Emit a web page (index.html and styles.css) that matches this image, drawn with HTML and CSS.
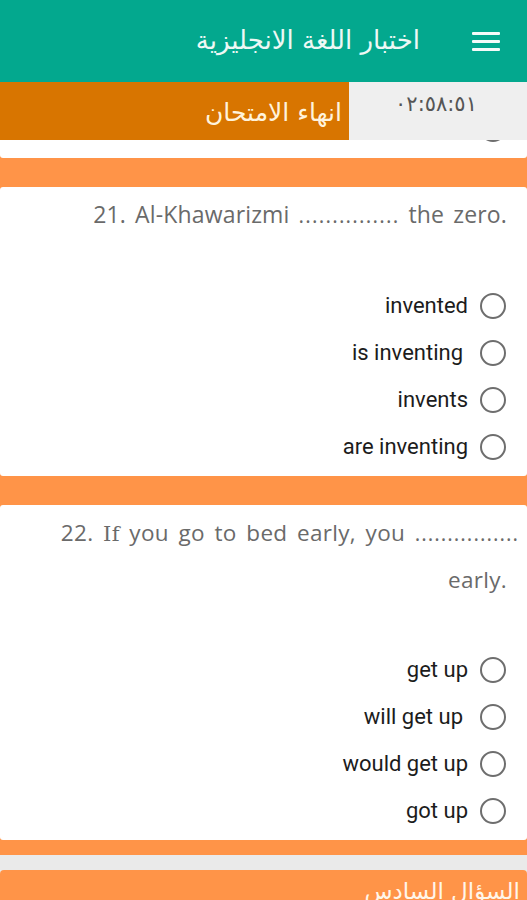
FILE: index.html
```
<!DOCTYPE html>
<html lang="ar">
<head>
<meta charset="utf-8">
<title>اختبار اللغة الانجليزية</title>
<link rel="stylesheet" href="styles.css">
</head>
<body>
<header class="appbar">
  <div class="menu" aria-label="menu">
    <span></span><span></span><span></span>
  </div>
  <h1 class="title">اختبار اللغة الانجليزية</h1>
</header>
<div class="exambar">
  <div class="finish">انهاء الامتحان</div>
  <div class="timer">٠٢:٥٨:٥١</div>
</div>
<main class="section">
  <div class="prev-card"><span class="radio"></span></div>
  <div class="card">
    <p class="q">21. Al-Khawarizmi <span class="dots">...............</span> the zero.</p>
    <ul class="opts">
      <li><span class="lbl">invented</span><span class="radio"></span></li>
      <li><span class="lbl sp">is inventing</span><span class="radio"></span></li>
      <li><span class="lbl">invents</span><span class="radio"></span></li>
      <li><span class="lbl">are inventing</span><span class="radio"></span></li>
    </ul>
  </div>
  <div class="card">
    <p class="q q22">22. <span class="serif">If</span> you go to bed early, you <span class="dots over">................</span><br>early.</p>
    <ul class="opts">
      <li><span class="lbl">get up</span><span class="radio"></span></li>
      <li><span class="lbl sp">will get up</span><span class="radio"></span></li>
      <li><span class="lbl">would get up</span><span class="radio"></span></li>
      <li><span class="lbl">got up</span><span class="radio"></span></li>
    </ul>
  </div>
</main>
<div class="spacer"></div>
<section class="section next">
  <h2 class="sec-title">السؤال السادس</h2>
</section>
</body>
</html>
```
FILE: styles.css
```
* { box-sizing: border-box; }
html, body { margin: 0; padding: 0; }
body {
  width: 527px;
  height: 900px;
  overflow: hidden;
  background: #eaeaea;
  font-family: "Open Sans", "DejaVu Sans", sans-serif;
}
.appbar {
  height: 82px;
  background: #03a88e;
  display: flex;
  flex-direction: row-reverse;
  align-items: center;
  padding-right: 27px;
  position: relative;
  z-index: 3;
}
.menu {
  width: 28px;
  display: flex;
  flex-direction: column;
  gap: 5px;
  margin-left: 52px;
}
.menu span {
  display: block;
  height: 3px;
  background: #f4fbf9;
  border-radius: 1px;
}
.title {
  margin: 0;
  font-family: "DejaVu Sans", sans-serif;
  font-weight: normal;
  font-size: 26px;
  color: #eef8f5;
  padding-bottom: 2px;
}
.exambar {
  height: 58px;
  display: flex;
  position: relative;
  z-index: 3;
}
.finish {
  width: 349px;
  background: #d87500;
  color: #fff3dc;
  font-family: "DejaVu Sans", sans-serif;
  font-size: 25px;
  display: flex;
  align-items: center;
  justify-content: flex-start;
  padding-right: 7px;
  padding-top: 2px;
  direction: rtl;
}
.timer {
  flex: 1;
  background: #efefef;
  color: #555;
  font-family: "DejaVu Sans", sans-serif;
  font-size: 21px;
  text-align: center;
  padding-top: 10px;
  padding-right: 4px;
}
.section {
  background: #ff9448;
  display: flex;
  flex-direction: column;
  gap: 29px;
  padding-bottom: 15px;
}
.prev-card {
  height: 18px;
  background: #fff;
  border-radius: 0 0 3px 3px;
  display: flex;
  justify-content: flex-end;
  padding-right: 21px;
}
.prev-card .radio {
  margin-top: -24px;
}
.card {
  background: #fff;
  border-radius: 3px;
  padding: 5px 20px 6px 20px;
}
.q {
  margin: 0 0 44px 0;
  text-align: right;
  font-size: 23px;
  line-height: 45px;
  color: #6a6a6a;
  white-space: nowrap;
  word-spacing: 3px;
  letter-spacing: 0.15px;
}
.q22 {
  font-size: 22.5px;
  word-spacing: 3.5px;
  letter-spacing: 0.3px;
}
.serif {
  font-family: "DejaVu Serif", serif;
  font-size: 21px;
}
.dots {
  letter-spacing: 1.2px;
  font-size: 21px;
}
.dots.over {
  margin-right: -12px;
  letter-spacing: 1px;
}
.opts {
  list-style: none;
  margin: 0;
  padding: 0;
}
.opts li {
  height: 47px;
  display: flex;
  justify-content: flex-end;
  align-items: center;
  gap: 12px;
  padding-right: 1px;
}
.lbl {
  font-family: Roboto, sans-serif;
  font-size: 22px;
  color: #1c1c1c;
}
.lbl.sp {
  margin-right: 5px;
}
.radio {
  width: 26px;
  height: 26px;
  border: 2px solid #6e6e6e;
  border-radius: 50%;
  flex: none;
  display: block;
  background: #fff;
}
.spacer {
  height: 15px;
}
.next {
  border-radius: 4px 4px 0 0;
  padding: 0 7px 0 0;
  height: 40px;
}
.sec-title {
  margin: 0;
  font-family: "DejaVu Sans", sans-serif;
  font-weight: normal;
  font-size: 23px;
  color: #fff6ea;
  text-align: right;
  padding-top: 8px;
  direction: rtl;
}
```
